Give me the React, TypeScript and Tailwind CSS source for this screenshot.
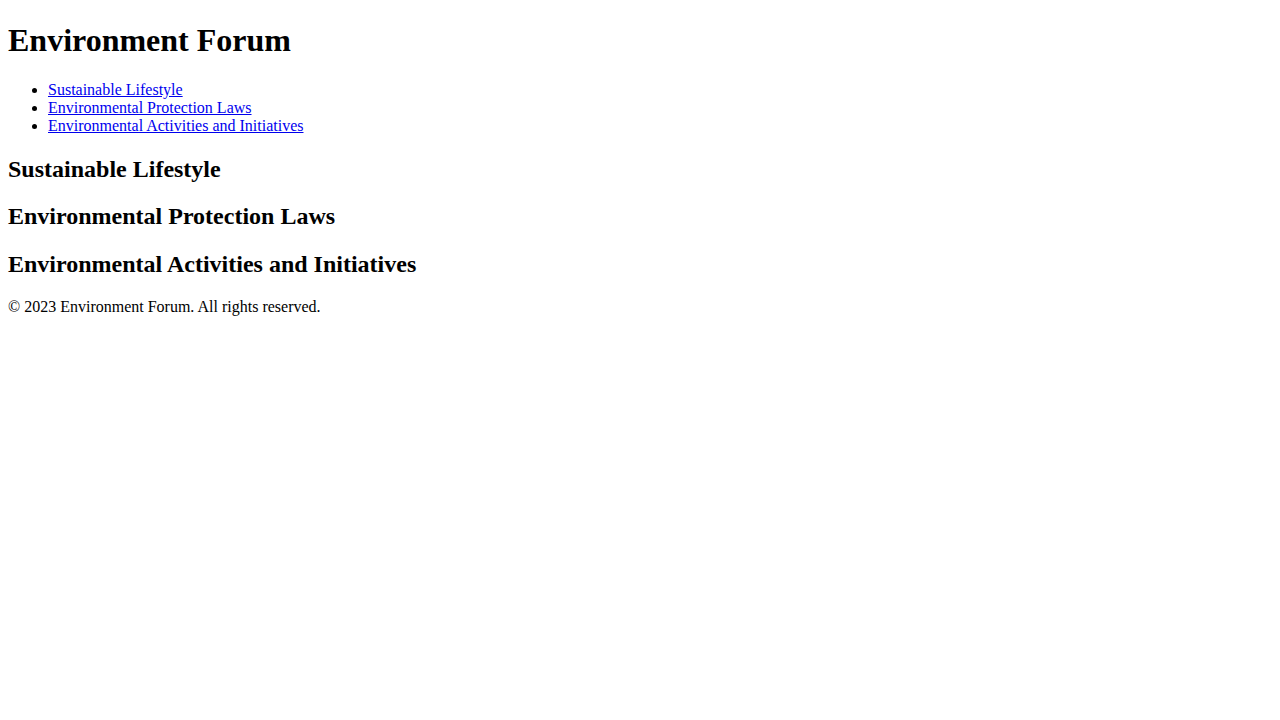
export default function App() {
  const links = [
    'Sustainable Lifestyle',
    'Environmental Protection Laws',
    'Environmental Activities and Initiatives',
  ]

  return (
    <div className="min-h-screen bg-white px-2 pt-px text-black text-[16px] leading-[1.15] font-['Liberation_Serif','Times_New_Roman',serif]">
      <header>
        <h1 className="my-[21.44px] text-[32px] font-bold leading-[1.15]">Environment Forum</h1>
        <nav>
          <ul className="my-4 list-disc pl-10">
            {links.map(label => (
              <li key={label}>
                <a href="#" className="text-[#0000ee] underline">{label}</a>
              </li>
            ))}
          </ul>
        </nav>
      </header>

      <main>
        {links.map(label => (
          <section key={label}>
            <h2 className="my-[19.92px] text-[24px] font-bold leading-[1.15]">{label}</h2>
          </section>
        ))}
      </main>

      <footer>
        <p className="my-4">© 2023 Environment Forum. All rights reserved.</p>
      </footer>
    </div>
  )
}
